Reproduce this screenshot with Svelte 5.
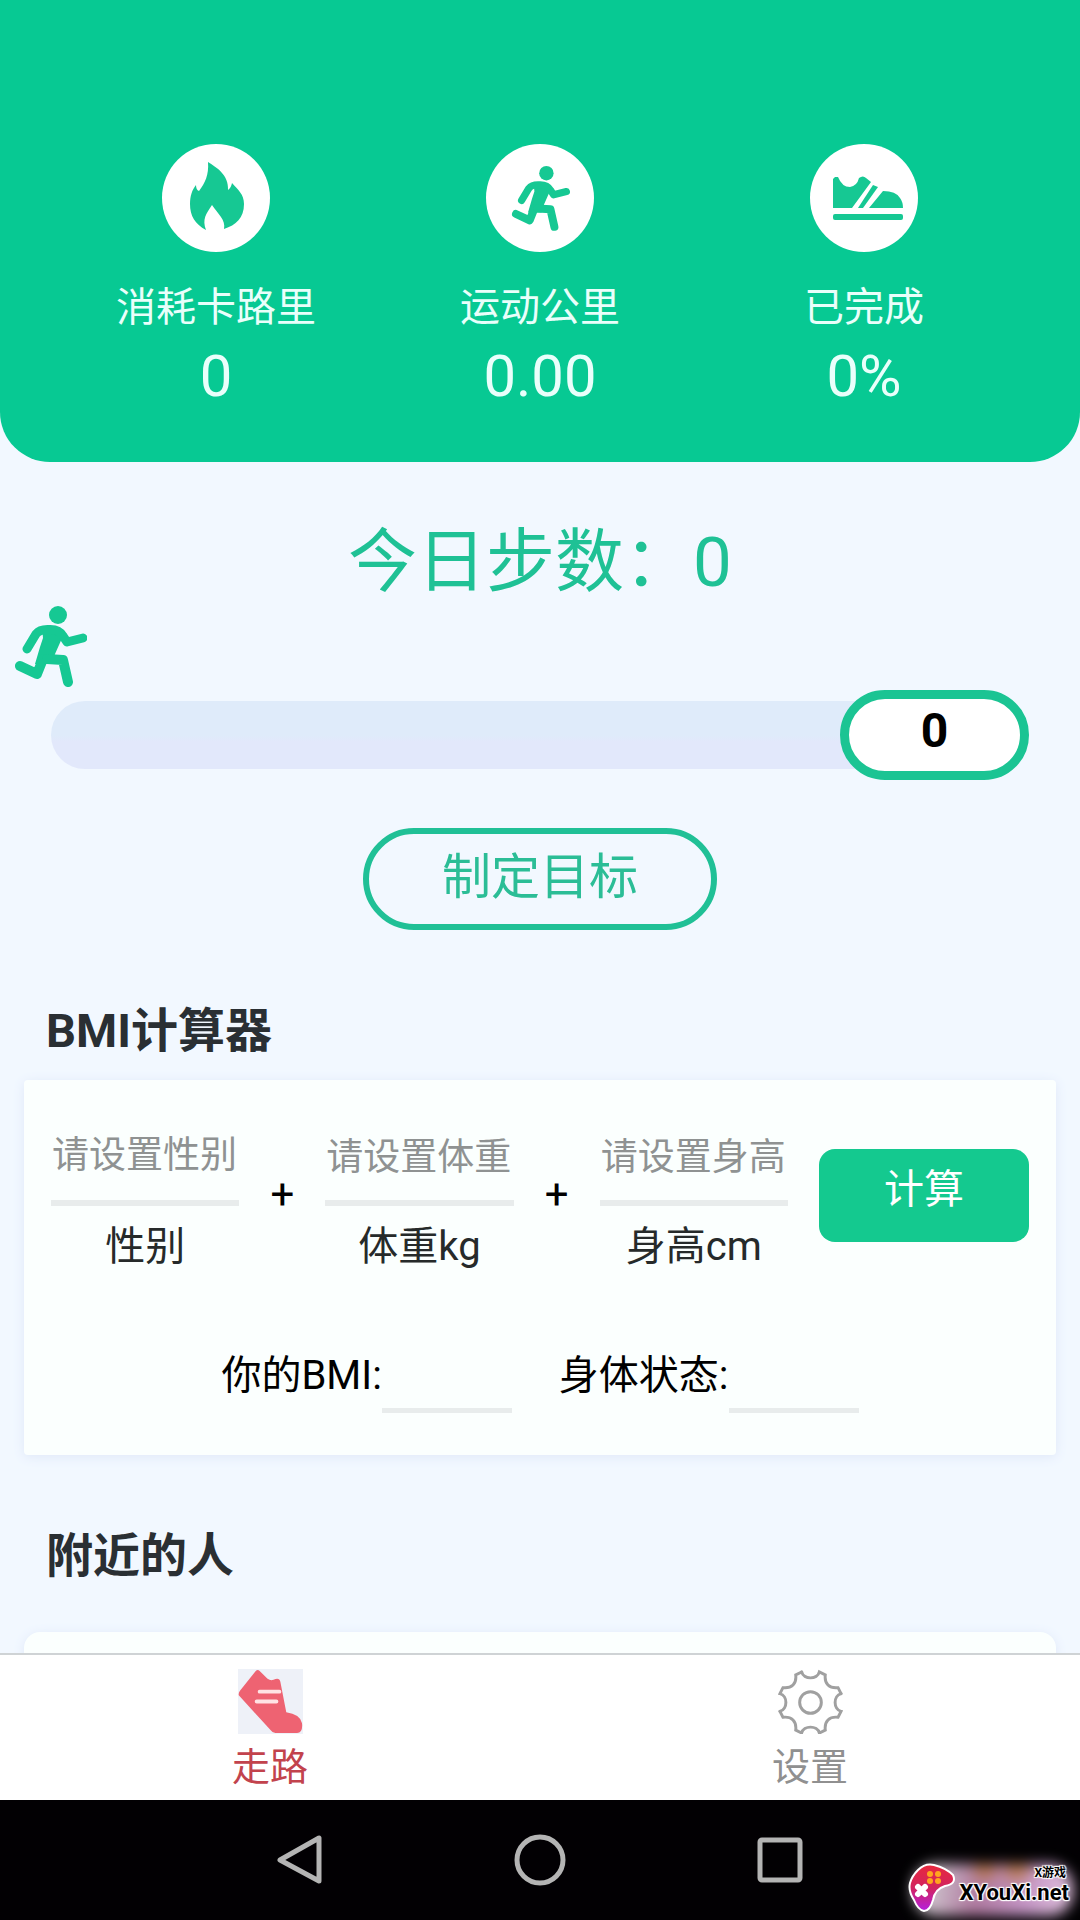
<script>
	let steps = $state(0);
	let goal = $state(0);
	let gender = $state('');
	let weight = $state('');
	let height = $state('');
	let bmi = $state('');
	let status = $state('');
	let tab = $state('walk');

	let percent = $derived(goal > 0 ? Math.min(100, Math.round((steps / goal) * 100)) : 0);

	let stats = $derived([
		{ icon: 'flame', label: '消耗卡路里', value: String(Math.round(steps * 0.04)) },
		{ icon: 'run', label: '运动公里', value: (steps * 0.0007).toFixed(2) },
		{ icon: 'shoe', label: '已完成', value: percent + '%' }
	]);

	function setGoal() {
		goal = goal === 0 ? 5000 : 0;
	}

	function calculate() {
		const w = Number(weight);
		const h = Number(height) / 100;
		if (!w || !h) return;
		const result = w / (h * h);
		bmi = result.toFixed(1);
		if (result < 18.5) status = '偏瘦';
		else if (result < 24) status = '正常';
		else status = '偏胖';
	}
</script>

{#snippet runner()}
	<circle cx="43" cy="9" r="9" />
	<path d="M27 20 L44 22 L48 30 L44 39 L40 48 L37 58 L20 58 L25 41 L28 32 Z" />
	<g fill="none" stroke="currentColor" stroke-linecap="round" stroke-linejoin="round">
		<path stroke-width="9" d="M12 43 L21 28 Q25 23 34 23.500 Q44 23 48 30 L52 36 L68 32" />
		<path stroke-width="10" d="M5 60 L22 68 L28 53" />
		<path stroke-width="10" d="M32 53 L48 54 L53 76" />
	</g>
{/snippet}

<div class="app">
	<main>
		<header>
			{#each stats as stat (stat.icon)}
				<div class="stat">
					<svg viewBox="0 0 108 108" aria-hidden="true">
						<circle class="disc" cx="54" cy="54" r="54" />
						{#if stat.icon === 'flame'}
							<path
								d="M46 18 C54 23 67 31 66 46 Q69 44 70 39 C76 46 82 50 82 60 C82 74 74 81 62 85 C64 76 56 70 50 61 C44 70 40 75 44 86 C33 80 28 72 28 60 C28 52 30 46 34 41 Q34 46 37 47 C43 39 47 31 46 18 Z"
							/>
						{:else if stat.icon === 'run'}
							<g transform="translate(26 22) scale(0.8)">{@render runner()}</g>
						{:else}
							<path d="M25 33 H28 Q32 43 40 43 Q47 42 49 34 Q53 31 56 34 L61 38 L42 64 H23 V35 Z" />
							<path d="M63 41 L68 43 L53 64 H48 Z" />
							<path d="M73 47 Q86 47 90 54 Q93 58 93 64 H59 Z" />
							<rect x="23" y="70" width="70" height="6" rx="2" />
						{/if}
					</svg>
					<span class="stat-label">{stat.label}</span>
					<span class="stat-value">{stat.value}</span>
				</div>
			{/each}
		</header>

		<h1>今日步数：{steps}</h1>

		<svg class="walker" viewBox="0 0 72 81" aria-hidden="true">{@render runner()}</svg>

		<div class="progress">
			<div class="track" role="progressbar" aria-label="今日步数" aria-valuenow={percent}></div>
			<div class="target">{goal}</div>
		</div>

		<button class="goal" onclick={setGoal}>制定目标</button>

		<h2>BMI计算器</h2>
		<section class="card">
			<div class="fields">
				<div class="field">
					<select id="gender" bind:value={gender} class:empty={!gender}>
						<option value="" disabled>请设置性别</option>
						<option value="m">男</option>
						<option value="f">女</option>
					</select>
					<label for="gender">性别</label>
				</div>
				<span class="plus">+</span>
				<div class="field">
					<input id="weight" inputmode="decimal" placeholder="请设置体重" bind:value={weight} />
					<label for="weight">体重kg</label>
				</div>
				<span class="plus">+</span>
				<div class="field">
					<input id="height" inputmode="decimal" placeholder="请设置身高" bind:value={height} />
					<label for="height">身高cm</label>
				</div>
				<button class="calc" onclick={calculate}>计算</button>
			</div>
			<div class="results">
				<div class="result">
					<span>你的BMI:</span>
					<output for="weight height">{bmi}</output>
				</div>
				<div class="result">
					<span>身体状态:</span>
					<output for="weight height">{status}</output>
				</div>
			</div>
		</section>

		<h2>附近的人</h2>
		<section class="card people"></section>
	</main>

	<nav class="tabs">
		<button class:active={tab === 'walk'} onclick={() => (tab = 'walk')}>
			<svg viewBox="0 0 66 66" aria-hidden="true">
				<rect width="66" height="66" fill="#eef1f8" />
				<path
					fill="#ee6372"
					d="M18 2 Q20 0 22 2 L30 10 Q33 12 36 11 Q42 8 43 13 L49 44 Q63 46 65 55 Q66 65 60 65 H38 Q35 65 33 62 L1 27 Q0 25 2 22 Z"
				/>
				<path stroke="#ffe3e4" stroke-width="4" stroke-linecap="round" d="M22 23 H42 M19 33 H39" />
			</svg>
			走路
		</button>
		<button class:active={tab === 'settings'} onclick={() => (tab = 'settings')}>
			<svg viewBox="0 0 66 66" aria-hidden="true">
				<g
					transform="translate(1 2)"
					fill="none"
					stroke="#a0a0a0"
					stroke-width="3"
					stroke-linecap="round"
				>
					{#each [0, 90, 180, 270] as angle}
						<path
							transform="rotate({angle} 32 32)"
							d="M23 1 C25 9 39 9 41 1 L47 4 C46 13 51 18 60 17 L63 23"
						/>
					{/each}
					<circle cx="32" cy="32" r="11" />
				</g>
			</svg>
			设置
		</button>
	</nav>

	<div class="system-bar">
		<button aria-label="返回">
			<svg viewBox="0 0 52 52"><path d="M45 4 V47 L6 26 Z" /></svg>
		</button>
		<button aria-label="主页">
			<svg viewBox="0 0 52 52"><circle cx="26" cy="26" r="23" /></svg>
		</button>
		<button aria-label="最近">
			<svg viewBox="0 0 52 52"><rect x="6" y="6" width="40" height="40" rx="2" /></svg>
		</button>

		<div class="brand">
			<svg viewBox="0 0 50 52" aria-hidden="true">
				<defs>
					<linearGradient id="pad" x1="0" y1="0" x2="0" y2="1">
						<stop offset="0" stop-color="#e8283c" />
						<stop offset="0.5" stop-color="#d2245f" />
						<stop offset="1" stop-color="#b41ee0" />
					</linearGradient>
				</defs>
				<path
					fill="url(#pad)"
					stroke="#fff"
					stroke-width="2"
					d="M11 8 Q18 1 27 3 Q39 6 46 13 Q50 22 38 24 Q28 27 26 38 Q23 49 17 49 Q11 48 7 38 Q1 29 3 21 Q5 14 11 8 Z"
				/>
				<g fill="#ffa51e">
					<circle cx="23" cy="12" r="3" />
					<circle cx="31" cy="12" r="3" />
					<circle cx="23" cy="19" r="3" />
					<circle cx="31" cy="19" r="3" />
				</g>
				<path stroke="#fff" stroke-width="6" stroke-linecap="round" d="M11 25 L18 32 M18 25 L11 32" />
			</svg>
			<div class="brand-text">
				<small>X游戏</small>
				<strong>XYouXi.net</strong>
			</div>
		</div>
	</div>
</div>

<style>
	:global(body) {
		margin: 0;
		background: #f2f8ff;
	}

	.app {
		display: flex;
		flex-direction: column;
		height: 100vh;
		font-family: Roboto, 'Noto Sans CJK SC', sans-serif;
		color: #000;
	}

	main {
		flex: 1;
		min-height: 0;
		overflow-y: auto;
		scrollbar-width: none;
		display: flex;
		flex-direction: column;
	}

	main > :global(*) {
		flex-shrink: 0;
	}

	button,
	input,
	select {
		font-family: inherit;
		margin: 0;
		border-radius: 0;
	}

	header {
		display: flex;
		padding: 144px 5% 52px;
		background: #07c993;
		border-radius: 0 0 50px 50px;
		color: #e9fffb;
	}

	.stat {
		flex: 1;
		display: flex;
		flex-direction: column;
		align-items: center;
	}

	.stat svg {
		width: 108px;
		height: 108px;
		fill: #16c893;
		color: #16c893;
	}

	.stat .disc {
		fill: #fff;
	}

	.stat-label {
		margin-top: 32px;
		font-size: 40px;
		line-height: 48px;
	}

	.stat-value {
		margin-top: 10px;
		font-size: 58px;
		line-height: 68px;
	}

	h1 {
		margin: 61px 0 0;
		font-size: 69px;
		font-weight: 400;
		line-height: 80px;
		text-align: center;
		color: #1fc195;
	}

	.walker {
		width: 72px;
		height: 81px;
		margin: 3px 0 0 15px;
		fill: #16c893;
		color: #16c893;
	}

	.progress {
		display: flex;
		align-items: center;
		margin-top: 3px;
		padding: 0 51px;
	}

	.track {
		flex: 1;
		height: 68px;
		margin-right: -60px;
		border-radius: 34px;
		background: linear-gradient(#dfebfa 50%, #e2e8fb 60%);
	}

	.target {
		box-sizing: border-box;
		width: 189px;
		height: 90px;
		border: 9px solid #1bc493;
		border-radius: 45px;
		background: #fff;
		font-size: 48px;
		font-weight: 700;
		line-height: 64px;
		text-align: center;
	}

	.goal {
		align-self: center;
		margin-top: 48px;
		padding: 0 73px 2px;
		border: 6px solid #20c096;
		border-radius: 51px;
		background: transparent;
		color: #2bbd96;
		font-size: 49px;
		line-height: 88px;
	}

	h2 {
		margin: 73px 46px 0;
		font-size: 47px;
		font-weight: 700;
		line-height: 56px;
		color: #2a2f33;
	}

	.card {
		margin: 21px 24px 0;
		padding: 48px 27px 39px;
		border-radius: 4px;
		background: #fbfffe;
		box-shadow: 0 2px 12px #dfe8f8;
	}

	.fields {
		display: flex;
		align-items: flex-start;
	}

	.field {
		flex: 1;
		min-width: 0;
		display: flex;
		flex-direction: column;
	}

	.field input,
	.field select {
		box-sizing: border-box;
		width: 100%;
		height: 78px;
		padding: 0 0 14px 1px;
		border: 0;
		border-bottom: 6px solid #e8ecec;
		outline: none;
		appearance: none;
		background: transparent;
		color: #222;
		font-size: 37px;
	}

	.field select {
		padding-bottom: 18px;
	}

	.field select.empty,
	.field input::placeholder {
		color: #8f9292;
		opacity: 1;
	}

	.field label {
		margin-top: 18px;
		font-size: 40px;
		line-height: 46px;
		text-align: center;
		color: #262a2a;
	}

	.plus {
		width: 86px;
		margin-top: 21px;
		font-size: 42px;
		line-height: 92px;
		text-align: center;
	}

	.calc {
		width: 210px;
		margin: 21px 0 0 31px;
		padding: 0 0 11px;
		border: 0;
		border-radius: 16px;
		background: #14c98f;
		color: #fff;
		font-size: 40px;
		line-height: 82px;
	}

	.results {
		display: flex;
		justify-content: center;
		gap: 47px;
		margin-top: 66px;
		font-size: 40px;
		line-height: 80px;
	}

	.result {
		display: flex;
	}

	.result output {
		box-sizing: border-box;
		width: 130px;
		height: 77px;
		border-bottom: 5px solid #e8ecec;
		text-align: center;
	}

	.people {
		min-height: 300px;
		margin-top: 48px;
		border-radius: 16px;
	}

	.tabs {
		display: flex;
		border-top: 2px solid #cfd3d5;
		background: #fff;
	}

	.tabs button {
		flex: 1;
		display: flex;
		flex-direction: column;
		align-items: center;
		gap: 9px;
		padding: 14px 0 9px;
		border: 0;
		background: none;
		color: #909090;
		font-size: 38px;
		line-height: 48px;
	}

	.tabs button.active {
		color: #c2434d;
	}

	.tabs svg {
		width: 65px;
		height: 65px;
	}

	.system-bar {
		position: relative;
		display: flex;
		justify-content: center;
		padding: 0 180px;
		background: #020003;
	}

	.system-bar button {
		flex: 1;
		display: flex;
		align-items: center;
		justify-content: center;
		height: 120px;
		padding: 0;
		border: 0;
		background: none;
	}

	.system-bar button svg {
		width: 52px;
		height: 52px;
		fill: none;
		stroke: #b4b4b4;
		stroke-width: 5;
		stroke-linejoin: round;
	}

	/* watermark floats over the system bar */
	.brand {
		position: absolute;
		right: 11px;
		bottom: 6px;
		display: flex;
		align-items: flex-end;
		gap: 3px;
	}

	.brand::before {
		content: '';
		position: absolute;
		inset: 2px -4px -2px 6px;
		border-radius: 24px;
		background:
			radial-gradient(circle at 45% 10%, #b8742e, transparent 16%),
			radial-gradient(circle at 65% 10%, #b8742e, transparent 16%),
			linear-gradient(100deg, #cfc8cf 10%, #b07aa0 40%, #c596c6 70%, #e3c6e0);
		filter: blur(7px);
	}

	.brand svg {
		position: relative;
		width: 50px;
		height: 52px;
	}

	.brand-text {
		position: relative;
		display: flex;
		flex-direction: column;
		align-items: flex-end;
		padding-bottom: 8px;
		color: #000;
		text-shadow:
			0 0 2px #fff,
			1px 1px 1px #fff,
			-1px -1px 1px #fff,
			1px -1px 1px #fff,
			-1px 1px 1px #fff;
	}

	.brand small {
		font-size: 12px;
		font-weight: 700;
		line-height: 14px;
		padding-right: 3px;
	}

	.brand strong {
		font-size: 22px;
		line-height: 26px;
	}
</style>
